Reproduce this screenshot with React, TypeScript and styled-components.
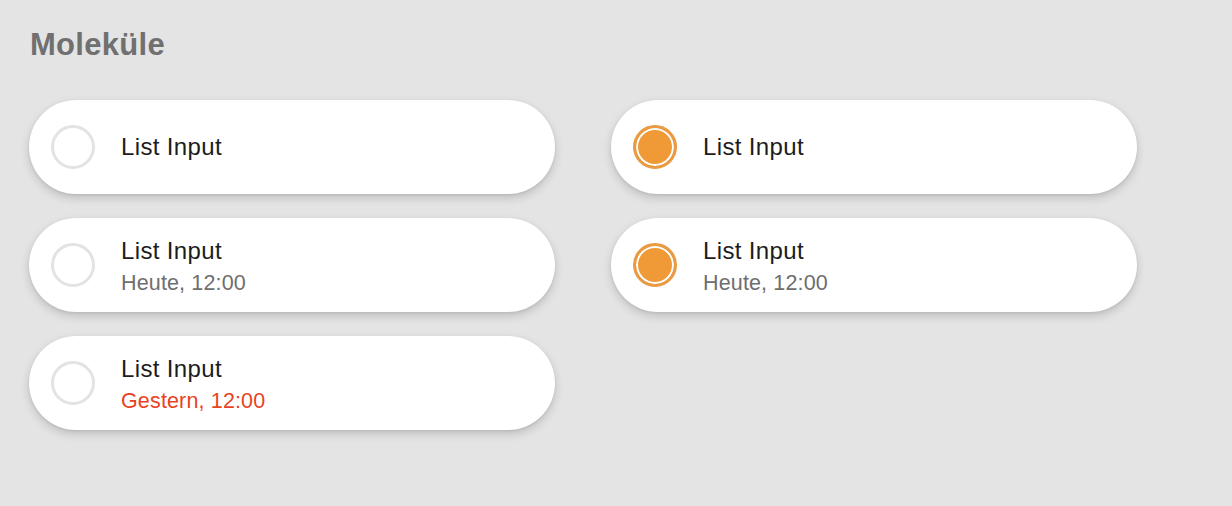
import React from "react";
import styled, { createGlobalStyle } from "styled-components";

type Item = {
  label: string;
  meta?: string;
  overdue?: boolean;
  checked?: boolean;
};

const LEFT: Item[] = [
  { label: "List Input" },
  { label: "List Input", meta: "Heute, 12:00" },
  { label: "List Input", meta: "Gestern, 12:00", overdue: true },
];

const RIGHT: Item[] = [
  { label: "List Input", checked: true },
  { label: "List Input", meta: "Heute, 12:00", checked: true },
];

const ListInput = ({ item }: { item: Item }) => (
  <Card>
    <Radio $checked={!!item.checked} />
    <TextCol $twoLine={!!item.meta}>
      <Label>{item.label}</Label>
      {item.meta && <Meta $overdue={!!item.overdue}>{item.meta}</Meta>}
    </TextCol>
  </Card>
);

const App = () => (
  <>
    <GlobalStyle />
    <Page>
      <Title>Moleküle</Title>
      <Columns>
        <Column>
          {LEFT.map((item, i) => (
            <ListInput item={item} key={i} />
          ))}
        </Column>
        <Column>
          {RIGHT.map((item, i) => (
            <ListInput item={item} key={i} />
          ))}
        </Column>
      </Columns>
    </Page>
  </>
);

const GlobalStyle = createGlobalStyle`
  html, body {
    margin: 0;
    padding: 0;
    background: #e4e4e4;
  }
  body {
    font-family: "Liberation Sans", Arial, sans-serif;
  }
`;

const Page = styled.div`
  min-height: 506px;
  box-sizing: border-box;
  padding: 27px 29px 0;
`;

const Title = styled.h1`
  margin: 0 0 0 1px;
  font-size: 31px;
  line-height: 36px;
  font-weight: 700;
  color: #707070;
  letter-spacing: 0.3px;
`;

const Columns = styled.div`
  display: grid;
  grid-template-columns: 526px 526px;
  column-gap: 56px;
  margin-top: 37px;
  align-items: start;
`;

const Column = styled.div`
  display: flex;
  flex-direction: column;
  gap: 24px;
`;

const Card = styled.div`
  height: 94px;
  box-sizing: border-box;
  background: #fff;
  border-radius: 47px;
  box-shadow: 0 4px 10px rgba(0, 0, 0, 0.16), 0 1px 3px rgba(0, 0, 0, 0.08);
  display: flex;
  align-items: center;
  padding: 0 22px;
  gap: 26px;
`;

const Radio = styled.span<{ $checked: boolean }>`
  flex: none;
  width: 44px;
  height: 44px;
  box-sizing: border-box;
  border-radius: 50%;
  border: 3px solid ${(p) => (p.$checked ? "#e99a42" : "#e3e3e3")};
  background: ${(p) => (p.$checked ? "#ef9a37" : "#fff")};
  box-shadow: ${(p) => (p.$checked ? "inset 0 0 0 2px #fff" : "none")};
`;

const TextCol = styled.div<{ $twoLine: boolean }>`
  display: flex;
  flex-direction: column;
  margin-top: ${(p) => (p.$twoLine ? "3px" : "0")};
`;

const Label = styled.div`
  font-size: 24px;
  line-height: 30px;
  letter-spacing: 0.35px;
  color: #1c1c1c;
`;

const Meta = styled.div<{ $overdue: boolean }>`
  font-size: 21.5px;
  line-height: 28px;
  margin-top: 3px;
  letter-spacing: 0.15px;
  color: ${(p) => (p.$overdue ? "#e8431f" : "#6e6e6e")};
`;

export default App;
